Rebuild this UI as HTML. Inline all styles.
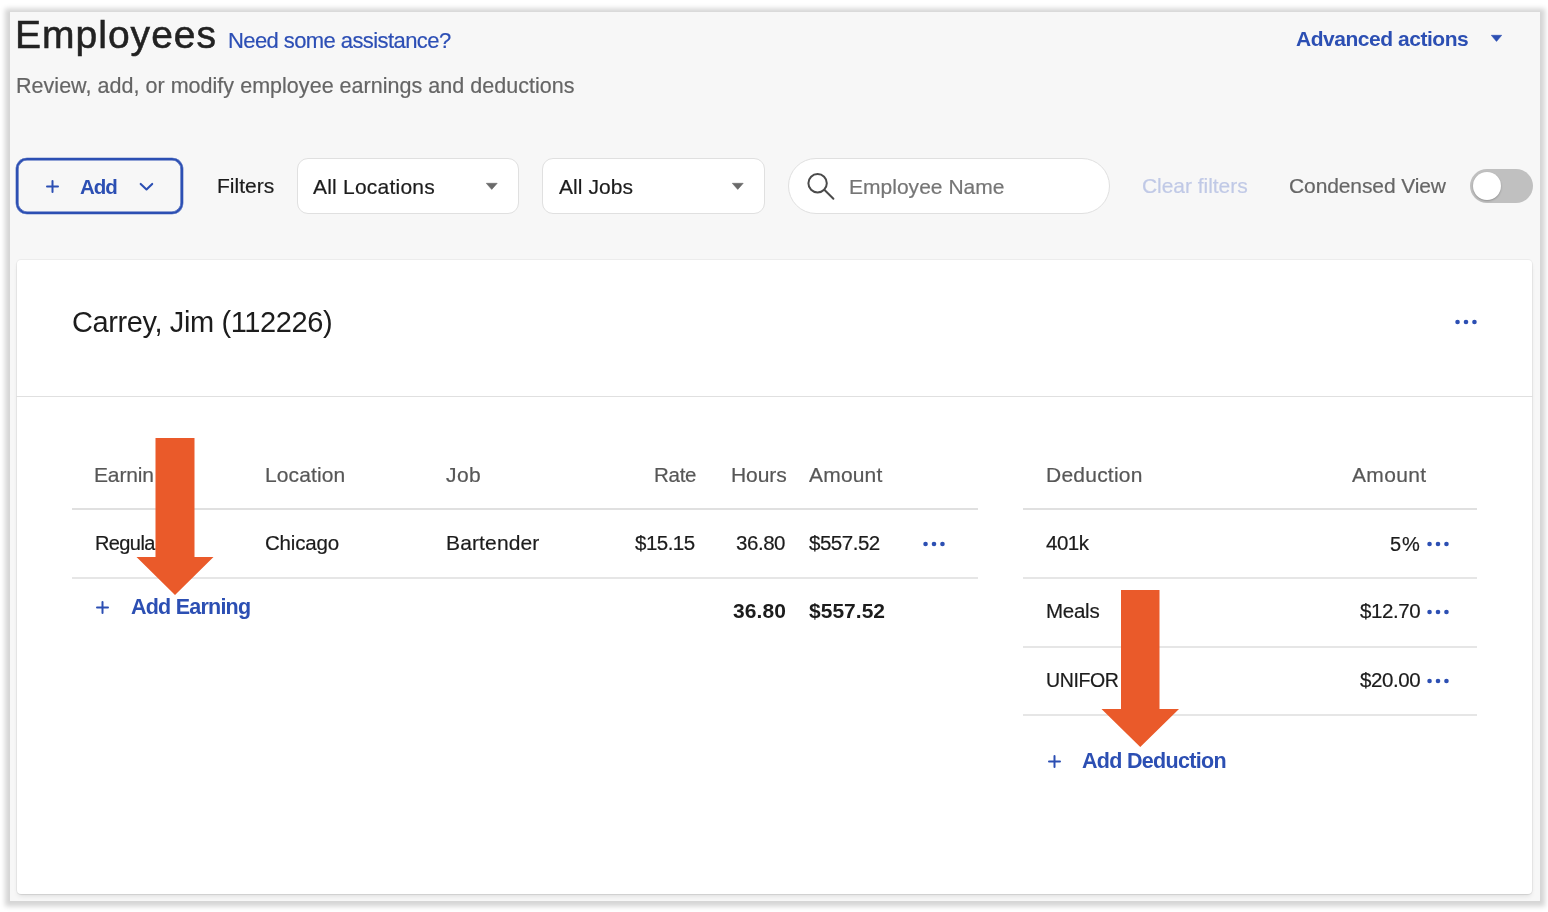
<!DOCTYPE html>
<html><head><meta charset="utf-8"><style>
html,body{margin:0;padding:0;width:1548px;height:912px;overflow:hidden;background:#fff;}
body{position:relative;font-family:"Liberation Sans",sans-serif;}
#frame{position:absolute;left:10px;top:12px;width:1530px;height:889px;background:#f7f7f7;box-shadow:0 0.5px 5px 5px rgba(0,0,0,0.17);}
#card{position:absolute;left:17px;top:260px;width:1515px;height:634px;background:#fff;border:none;border-radius:4px;box-shadow:0 0 0 1px rgba(0,0,0,0.045),0 1px 1px rgba(0,0,0,0.05),0 3px 5px -1px rgba(0,0,0,0.1);}
.t{position:absolute;white-space:nowrap;will-change:transform;}
.box{position:absolute;box-sizing:content-box;}
.ln{position:absolute;}
.dot{position:absolute;border-radius:50%;}
.ic{position:absolute;overflow:visible;}
</style></head><body>
<div id="frame"></div>
<div id="card"></div>
<div class="ln" style="left:16px;top:396px;width:1517px;height:1px;background:#e0e0e0"></div>
<div class="box" style="left:16px;top:158px;width:163px;height:52px;border:2px solid #2c4fb3;border-radius:11px;background:transparent;box-shadow:inset 0 0 0 0.6px #2c4fb3,0 0 0 0.3px #2c4fb3"></div>
<svg class="ic" style="left:45.5px;top:180px" width="13" height="13" viewBox="0 0 13 13"><path d="M6.5 1V12M1 6.5H12" stroke="#2c4fb3" stroke-width="2" stroke-linecap="round" fill="none"/></svg>
<svg class="ic" style="left:139px;top:182px" width="15" height="10" viewBox="0 0 15 10"><path d="M1.7 1.9L7.5 7.4L13.2 1.9" stroke="#2c4fb3" stroke-width="2.1" stroke-linecap="round" stroke-linejoin="round" fill="none"/></svg>
<div class="box" style="left:297px;top:158px;width:220px;height:54px;border:1px solid #e0e0e0;border-radius:11px;background:#fff"></div>
<svg class="ic" style="left:486px;top:183px" width="11.5" height="6.6" viewBox="0 0 11.5 6.6"><path d="M0.3 0.3H11.2L5.75 6.3999999999999995Z" fill="#6a6a6a" stroke="#6a6a6a" stroke-width="0.6" stroke-linejoin="round"/></svg>
<div class="box" style="left:542px;top:158px;width:221px;height:54px;border:1px solid #e0e0e0;border-radius:11px;background:#fff"></div>
<svg class="ic" style="left:731.8px;top:183px" width="11.5" height="6.6" viewBox="0 0 11.5 6.6"><path d="M0.3 0.3H11.2L5.75 6.3999999999999995Z" fill="#6a6a6a" stroke="#6a6a6a" stroke-width="0.6" stroke-linejoin="round"/></svg>
<div class="box" style="left:788px;top:158px;width:320px;height:54px;border:1px solid #e0e0e0;border-radius:28px;background:#fff"></div>
<svg class="ic" style="left:805px;top:171px" width="32" height="32" viewBox="0 0 32 32"><circle cx="12.6" cy="12.2" r="9.2" stroke="#4a4a4a" stroke-width="2" fill="none"/><path d="M19.3 18.8L28.4 27.8" stroke="#4a4a4a" stroke-width="2" stroke-linecap="round" fill="none"/></svg>
<div class="box" style="left:1470px;top:169px;width:63px;height:34px;border-radius:17px;background:#c0c0c0"></div>
<div class="box" style="left:1472.7px;top:171.8px;width:28.5px;height:28.5px;border-radius:50%;background:#fff;box-shadow:0 1px 2px rgba(0,0,0,0.25)"></div>
<svg class="ic" style="left:1491px;top:35.2px" width="11" height="6.6" viewBox="0 0 11 6.6"><path d="M0.3 0.3H10.7L5.5 6.3999999999999995Z" fill="#2c4fb3" stroke="#2c4fb3" stroke-width="0.6" stroke-linejoin="round"/></svg>
<svg class="ic" style="left:1450.9px;top:316.7px" width="30" height="10" viewBox="0 0 30 10"><circle cx="6.55" cy="5" r="2.3" fill="#2c4fb3"/><circle cx="15.00" cy="5" r="2.3" fill="#2c4fb3"/><circle cx="23.45" cy="5" r="2.3" fill="#2c4fb3"/></svg>
<div class="ln" style="left:72px;top:508px;width:906px;height:2px;background:#e0e0e0"></div>
<div class="ln" style="left:72px;top:577px;width:906px;height:2px;background:#e6e6e6"></div>
<div class="ln" style="left:1023px;top:508px;width:454px;height:2px;background:#e0e0e0"></div>
<div class="ln" style="left:1023px;top:577px;width:454px;height:2px;background:#e6e6e6"></div>
<div class="ln" style="left:1023px;top:646px;width:454px;height:1.5px;background:#e6e6e6"></div>
<div class="ln" style="left:1023px;top:714px;width:454px;height:2px;background:#e6e6e6"></div>
<svg class="ic" style="left:918.6px;top:539px" width="30" height="10" viewBox="0 0 30 10"><circle cx="6.55" cy="5" r="2.3" fill="#2c4fb3"/><circle cx="15.00" cy="5" r="2.3" fill="#2c4fb3"/><circle cx="23.45" cy="5" r="2.3" fill="#2c4fb3"/></svg>
<svg class="ic" style="left:1422.8px;top:538.9px" width="30" height="10" viewBox="0 0 30 10"><circle cx="6.55" cy="5" r="2.3" fill="#2c4fb3"/><circle cx="15.00" cy="5" r="2.3" fill="#2c4fb3"/><circle cx="23.45" cy="5" r="2.3" fill="#2c4fb3"/></svg>
<svg class="ic" style="left:1422.8px;top:607.2px" width="30" height="10" viewBox="0 0 30 10"><circle cx="6.55" cy="5" r="2.3" fill="#2c4fb3"/><circle cx="15.00" cy="5" r="2.3" fill="#2c4fb3"/><circle cx="23.45" cy="5" r="2.3" fill="#2c4fb3"/></svg>
<svg class="ic" style="left:1422.8px;top:675.5px" width="30" height="10" viewBox="0 0 30 10"><circle cx="6.55" cy="5" r="2.3" fill="#2c4fb3"/><circle cx="15.00" cy="5" r="2.3" fill="#2c4fb3"/><circle cx="23.45" cy="5" r="2.3" fill="#2c4fb3"/></svg>
<svg class="ic" style="left:96px;top:601px" width="13" height="13" viewBox="0 0 13 13"><path d="M6.5 1V12M1 6.5H12" stroke="#2c4fb3" stroke-width="2" stroke-linecap="round" fill="none"/></svg>
<svg class="ic" style="left:1047.5px;top:755px" width="13" height="13" viewBox="0 0 13 13"><path d="M6.5 1V12M1 6.5H12" stroke="#2c4fb3" stroke-width="2" stroke-linecap="round" fill="none"/></svg>
<div id="t_emp" class="t" style="left:14.80px;top:14.98px;font-size:39px;line-height:39px;letter-spacing:1.016px;color:#222222;-webkit-text-stroke:0.55px #222;">Employees</div>
<div id="t_need" class="t" style="left:228.35px;top:29.73px;font-size:22px;line-height:22px;letter-spacing:-0.583px;color:#2d4fb5;-webkit-text-stroke:0.2px #2d4fb5;">Need some assistance?</div>
<div id="t_sub" class="t" style="left:15.52px;top:76.00px;font-size:21.5px;line-height:21.5px;letter-spacing:0.030px;color:#656565;-webkit-text-stroke:0.2px #656565;">Review, add, or modify employee earnings and deductions</div>
<div id="t_adv" class="t" style="left:1296.00px;top:27.70px;font-size:21px;line-height:21px;letter-spacing:-0.463px;color:#2c4fb3;font-weight:700;">Advanced actions</div>
<div id="t_add" class="t" style="left:79.66px;top:176.72px;font-size:20.5px;line-height:20.5px;letter-spacing:-1.038px;color:#2c4fb3;font-weight:700;">Add</div>
<div id="t_filters" class="t" style="left:216.64px;top:175.14px;font-size:21px;line-height:21px;letter-spacing:0.002px;color:#1c1c1c;-webkit-text-stroke:0.2px #1c1c1c;">Filters</div>
<div id="t_loc" class="t" style="left:313.22px;top:175.94px;font-size:21px;line-height:21px;letter-spacing:0.221px;color:#1c1c1c;-webkit-text-stroke:0.2px #1c1c1c;">All Locations</div>
<div id="t_jobs" class="t" style="left:559.00px;top:175.94px;font-size:21px;line-height:21px;letter-spacing:0.071px;color:#1c1c1c;-webkit-text-stroke:0.2px #1c1c1c;">All Jobs</div>
<div id="t_ename" class="t" style="left:849.42px;top:175.94px;font-size:21px;line-height:21px;letter-spacing:0.019px;color:#757575;-webkit-text-stroke:0.2px #757575;">Employee Name</div>
<div id="t_clear" class="t" style="left:1141.54px;top:175.22px;font-size:21px;line-height:21px;letter-spacing:-0.046px;color:#c0c9e6;-webkit-text-stroke:0.2px #c0c9e6;">Clear filters</div>
<div id="t_cond" class="t" style="left:1289.20px;top:175.22px;font-size:21px;line-height:21px;letter-spacing:-0.106px;color:#666666;-webkit-text-stroke:0.2px #666666;">Condensed View</div>
<div id="t_name" class="t" style="left:71.98px;top:308.05px;font-size:29px;line-height:29px;letter-spacing:-0.389px;color:#1c1c1c;">Carrey, Jim (112226)</div>
<div id="h_earn" class="t" style="left:94.30px;top:464.22px;font-size:21px;line-height:21px;letter-spacing:-0.138px;color:#575757;-webkit-text-stroke:0.2px #575757;">Earnin</div>
<div id="h_loc" class="t" style="left:265.20px;top:464.22px;font-size:21px;line-height:21px;letter-spacing:0.112px;color:#575757;-webkit-text-stroke:0.2px #575757;">Location</div>
<div id="h_job" class="t" style="left:446.34px;top:464.22px;font-size:21px;line-height:21px;letter-spacing:0.402px;color:#575757;-webkit-text-stroke:0.2px #575757;">Job</div>
<div id="h_rate" class="t" style="left:653.64px;top:464.64px;font-size:20.5px;line-height:20.5px;letter-spacing:-0.290px;color:#575757;-webkit-text-stroke:0.2px #575757;">Rate</div>
<div id="h_hours" class="t" style="left:730.54px;top:464.22px;font-size:21px;line-height:21px;letter-spacing:-0.075px;color:#575757;-webkit-text-stroke:0.2px #575757;">Hours</div>
<div id="h_amt" class="t" style="left:808.78px;top:464.22px;font-size:21px;line-height:21px;letter-spacing:0.189px;color:#575757;-webkit-text-stroke:0.2px #575757;">Amount</div>
<div id="h_ded" class="t" style="left:1046.20px;top:464.22px;font-size:21px;line-height:21px;letter-spacing:0.234px;color:#575757;-webkit-text-stroke:0.2px #575757;">Deduction</div>
<div id="h_damt" class="t" style="left:1352.22px;top:464.22px;font-size:21px;line-height:21px;letter-spacing:0.321px;color:#575757;-webkit-text-stroke:0.2px #575757;">Amount</div>
<div id="r_reg" class="t" style="left:94.98px;top:533.07px;font-size:20px;line-height:20px;letter-spacing:-0.607px;color:#1c1c1c;-webkit-text-stroke:0.2px #1c1c1c;">Regula</div>
<div id="r_chi" class="t" style="left:264.54px;top:532.64px;font-size:20.5px;line-height:20.5px;letter-spacing:-0.185px;color:#1c1c1c;-webkit-text-stroke:0.2px #1c1c1c;">Chicago</div>
<div id="r_bar" class="t" style="left:446.42px;top:532.22px;font-size:21px;line-height:21px;letter-spacing:0.139px;color:#1c1c1c;-webkit-text-stroke:0.2px #1c1c1c;">Bartender</div>
<div id="r_rate" class="t" style="left:635.00px;top:532.64px;font-size:20.5px;line-height:20.5px;letter-spacing:-0.526px;color:#1c1c1c;-webkit-text-stroke:0.2px #1c1c1c;">$15.15</div>
<div id="r_hrs" class="t" style="left:736.10px;top:532.64px;font-size:20.5px;line-height:20.5px;letter-spacing:-0.448px;color:#1c1c1c;-webkit-text-stroke:0.2px #1c1c1c;">36.80</div>
<div id="r_amt" class="t" style="left:808.88px;top:532.64px;font-size:20.5px;line-height:20.5px;letter-spacing:-0.481px;color:#1c1c1c;-webkit-text-stroke:0.2px #1c1c1c;">$557.52</div>
<div id="tot_hrs" class="t" style="left:732.78px;top:600.42px;font-size:21px;line-height:21px;letter-spacing:0.070px;color:#1c1c1c;font-weight:700;">36.80</div>
<div id="tot_amt" class="t" style="left:808.88px;top:600.42px;font-size:21px;line-height:21px;letter-spacing:0.021px;color:#1c1c1c;font-weight:700;">$557.52</div>
<div id="a_earn" class="t" style="left:130.52px;top:597.28px;font-size:21.5px;line-height:21.5px;letter-spacing:-0.769px;color:#2c4fb3;font-weight:700;">Add Earning</div>
<div id="d_401" class="t" style="left:1046.34px;top:533.16px;font-size:20.5px;line-height:20.5px;letter-spacing:-0.508px;color:#1c1c1c;-webkit-text-stroke:0.2px #1c1c1c;">401k</div>
<div id="d_5" class="t" style="left:1390.32px;top:533.59px;font-size:20px;line-height:20px;letter-spacing:0.805px;color:#1c1c1c;-webkit-text-stroke:0.2px #1c1c1c;">5%</div>
<div id="d_meals" class="t" style="left:1046.20px;top:601.48px;font-size:20.5px;line-height:20.5px;letter-spacing:-0.256px;color:#1c1c1c;-webkit-text-stroke:0.2px #1c1c1c;">Meals</div>
<div id="d_12" class="t" style="left:1360.00px;top:601.48px;font-size:20.5px;line-height:20.5px;letter-spacing:-0.390px;color:#1c1c1c;-webkit-text-stroke:0.2px #1c1c1c;">$12.70</div>
<div id="d_uni" class="t" style="left:1046.20px;top:670.53px;font-size:19.5px;line-height:19.5px;letter-spacing:-0.362px;color:#1c1c1c;-webkit-text-stroke:0.2px #1c1c1c;">UNIFOR</div>
<div id="d_20" class="t" style="left:1360.00px;top:669.68px;font-size:20.5px;line-height:20.5px;letter-spacing:-0.390px;color:#1c1c1c;-webkit-text-stroke:0.2px #1c1c1c;">$20.00</div>
<div id="a_ded" class="t" style="left:1082.24px;top:750.56px;font-size:21.5px;line-height:21.5px;letter-spacing:-0.693px;color:#2c4fb3;font-weight:700;">Add Deduction</div>
<svg class="ic" style="left:0;top:0" width="1548" height="912" viewBox="0 0 1548 912"><path d="M155.5 438H194.5V557H213.5L175.0 595L136.5 557H155.5Z" fill="#ea5a2a"/></svg>
<svg class="ic" style="left:0;top:0" width="1548" height="912" viewBox="0 0 1548 912"><path d="M1121 590H1159.5V709H1179L1140.25 747L1101.5 709H1121Z" fill="#ea5a2a"/></svg>
</body></html>
